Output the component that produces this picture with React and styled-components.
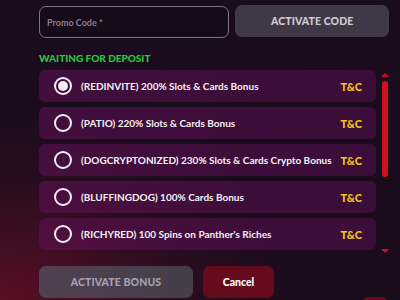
import styled, { createGlobalStyle } from "styled-components";

const GlobalStyle = createGlobalStyle`
  html, body {
    margin: 0;
    padding: 0;
    width: 400px;
    height: 300px;
    overflow: hidden;
    background: #1a0c1d;
  }
  * { box-sizing: border-box; }
`;

const bonuses = [
  { label: "(REDINVITE) 200% Slots & Cards Bonus", checked: true },
  { label: "(PATIO) 220% Slots & Cards Bonus" },
  { label: "(DOGCRYPTONIZED) 230% Slots & Cards Crypto Bonus" },
  { label: "(BLUFFINGDOG) 100% Cards Bonus" },
  { label: "(RICHYRED) 100 Spins on Panther's Riches" },
];

function App() {
  return (
    <Page>
      <GlobalStyle />
      <CodeRow>
        <PromoInput placeholder="Promo Code *" />
        <GreyButton $w="154px">ACTIVATE CODE</GreyButton>
      </CodeRow>
      <Status>WAITING FOR DEPOSIT</Status>
      <ListArea>
        <List>
          {bonuses.map((b) => (
            <Row key={b.label}>
              <Radio $checked={b.checked} />
              <Label>{b.label}</Label>
              <Terms>T&amp;C</Terms>
            </Row>
          ))}
        </List>
        <Scroll>
          <Arrow />
          <Track>
            <Thumb />
          </Track>
          <Arrow $down />
        </Scroll>
      </ListArea>
      <Actions>
        <GreyButton $w="154px" $dim>ACTIVATE BONUS</GreyButton>
        <CancelButton>Cancel</CancelButton>
      </Actions>
      <Corner />
    </Page>
  );
}

export default App;

const Page = styled.div`
  position: relative;
  width: 400px;
  height: 300px;
  padding: 5px 11px 0 39px;
  font-family: "Lato", "Liberation Sans", sans-serif;
  background:
    radial-gradient(ellipse 300px 190px at 0% 100%, rgba(110, 16, 38, 0.75), rgba(80, 14, 40, 0.3) 60%, transparent 100%),
    #1a0c1d;
`;

const CodeRow = styled.div`
  display: flex;
  gap: 6px;
  height: 33px;
`;

const PromoInput = styled.input`
  width: 191px;
  height: 32px;
  margin-top: 1px;
  border: 1px solid #807187;
  border-radius: 7px;
  background: #170a1a;
  padding: 0 7px;
  color: #fff;
  font-family: inherit;
  font-size: 9px;
  font-weight: 700;
  outline: none;
  &::placeholder {
    color: #8b7f8f;
  }
`;

const GreyButton = styled.button`
  width: ${(p) => p.$w};
  height: 32px;
  border: none;
  border-radius: 7px;
  background: ${(p) =>
    p.$dim
      ? "linear-gradient(90deg, #514152, #453d4b)"
      : "#3f3848"};
  color: ${(p) => (p.$dim ? "#a99fae" : "#cfcbd3")};
  font-family: inherit;
  font-size: 10.5px;
  font-weight: 900;
  letter-spacing: 0.1px;
`;

const Status = styled.div`
  margin-top: 14px;
  height: 12px;
  color: #27c93f;
  font-size: 10px;
  font-weight: 900;
  line-height: 12px;
`;

const ListArea = styled.div`
  display: flex;
  gap: 5px;
  margin-top: 6px;
`;

const List = styled.div`
  display: flex;
  flex-direction: column;
  gap: 5px;
  width: 337px;
`;

const Row = styled.div`
  display: flex;
  align-items: center;
  height: 32px;
  padding: 0 14px 0 15px;
  border-radius: 6px;
  background: linear-gradient(90deg, rgba(96, 16, 86, 0.56), rgba(84, 14, 78, 0.56));
`;

const Radio = styled.span`
  flex: none;
  width: 18px;
  height: 18px;
  border: 2px solid #f4eef4;
  border-radius: 50%;
  display: flex;
  align-items: center;
  justify-content: center;
  &::after {
    content: "";
    display: ${(p) => (p.$checked ? "block" : "none")};
    width: 10px;
    height: 10px;
    border-radius: 50%;
    background: #f4eef4;
  }
`;

const Label = styled.span`
  flex: 1;
  margin-left: 9px;
  color: #f5eff5;
  font-size: 10px;
  font-weight: 700;
  white-space: nowrap;
`;

const Terms = styled.span`
  color: #f3c41c;
  font-size: 11px;
  font-weight: 900;
`;

const Scroll = styled.div`
  display: flex;
  flex-direction: column;
  align-items: center;
  width: 8px;
  padding-top: 3px;
`;

const Arrow = styled.span`
  width: 0;
  height: 0;
  border-left: 4px solid transparent;
  border-right: 4px solid transparent;
  ${(p) =>
    p.$down
      ? "border-top: 4px solid #c8102a; margin-top: 5px;"
      : "border-bottom: 4px solid #c8102a; margin-bottom: 4px;"}
`;

const Track = styled.div`
  width: 6px;
  height: 163px;
`;

const Thumb = styled.div`
  width: 6px;
  height: 96px;
  border-radius: 3px;
  background: #d0101f;
`;

const Actions = styled.div`
  display: flex;
  gap: 10px;
  margin-top: 13px;
`;

const CancelButton = styled.button`
  width: 71px;
  height: 32px;
  border: none;
  border-radius: 7px;
  background: #650b1b;
  color: #fff;
  font-family: inherit;
  font-size: 10.5px;
  font-weight: 900;
`;

const Corner = styled.div`
  position: absolute;
  left: 363px;
  top: 297px;
  width: 24px;
  height: 10px;
  border-radius: 6px;
  background: #6a0b1c;
`;
